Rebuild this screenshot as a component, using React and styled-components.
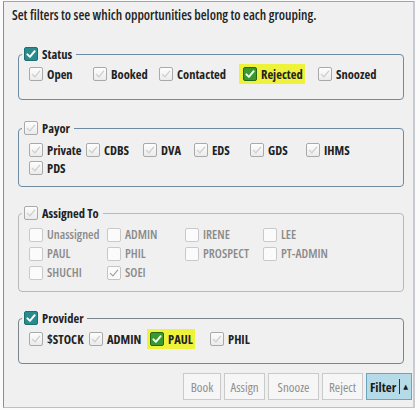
import React from 'react';
import styled, { createGlobalStyle } from 'styled-components';

const GlobalStyle = createGlobalStyle`
  html, body {
    margin: 0;
    padding: 0;
    background: #fbfbfb;
  }
  body {
    font-family: "Open Sans", "DejaVu Sans Condensed", sans-serif;
    font-stretch: 75%;
    color: #1e1e1e;
  }
`;

const Frame = styled.div`
  width: 420px;
  height: 410px;
  box-sizing: border-box;
  padding: 1px 5px 2px 3px;
`;

const Panel = styled.div`
  height: 407px;
  box-sizing: border-box;
  background: #f0f0f0;
  border-top: 1px solid #a4a4a4;
  border-left: 1px solid #8e8e8e;
  border-right: 2px solid #c7cbd0;
  border-bottom: 1px solid #a6c6de;
  padding: 5px 9px 0 8px;
`;

const Title = styled.div`
  font-size: 13.5px;
  font-weight: 600;
  line-height: 16px;
  height: 16px;
  color: #222;
  white-space: nowrap;
`;

const Group = styled.fieldset`
  margin: ${p => p.$top}px 0 0 6px;
  padding: ${p => p.$pt}px 9px ${p => p.$pb}px 10px;
  border: 1px solid ${p => p.$line};
  border-radius: 4px;
  min-width: 0;
`;

const Legend = styled.legend`
  display: flex;
  align-items: center;
  gap: 4px;
  height: 16px;
  margin-left: -7px;
  padding: 0 4px 0 2px;
  font-size: 12.5px;
  font-weight: 700;
  color: #222;
`;

const Options = styled.div`
  display: flex;
  flex-wrap: wrap;
`;

const Item = styled.div`
  display: flex;
  align-items: stretch;
  flex: none;
  width: ${p => (p.$w ? `${p.$w}px` : 'auto')};
  height: ${p => p.$h}px;
`;

const Mark = styled.span`
  display: inline-flex;
  align-items: center;
  gap: 4px;
  padding: ${p => (p.$hl ? p.$pad : '0')};
  background: ${p => (p.$hl ? '#eff23a' : 'transparent')};
`;

const Label = styled.span`
  font-size: 12.5px;
  font-weight: ${p => (p.$muted ? 600 : 700)};
  color: ${p => (p.$muted ? '#8a8a8a' : '#222')};
  white-space: nowrap;
`;

const tones = {
  off: { edge: '#a9a9a9', fill: 'linear-gradient(#fdfdfd, #ebebeb)', tick: '#cdcdcd', sw: 1.3 },
  blank: { edge: '#c9c9c9', fill: '#fbfbfb', tick: null, sw: 1.3 },
  faint: { edge: '#c4c4c4', fill: '#fbfbfb', tick: '#9c9c9c', sw: 1.1 },
  teal: { edge: '#1d7072', fill: '#2a8b8c', tick: '#ffffff', sw: 2 },
  green: { edge: '#24661c', fill: '#3a982e', tick: '#f2fff0', sw: 2 },
};

const Box = styled.span`
  width: 14px;
  height: 14px;
  box-sizing: border-box;
  flex: none;
  display: inline-flex;
  align-items: center;
  justify-content: center;
  border: 1px solid ${p => tones[p.$tone].edge};
  background: ${p => tones[p.$tone].fill};
  border-radius: 2px;
`;

function Check({ tone = 'off' }) {
  const t = tones[tone];
  return (
    <Box $tone={tone}>
      {t.tick && (
        <svg width="12" height="12" viewBox="0 0 12 12">
          <path d="M2.4 6.4 L4.9 8.9 L9.7 3.2" fill="none" stroke={t.tick} strokeWidth={t.sw} strokeLinecap="round" strokeLinejoin="round" />
        </svg>
      )}
    </Box>
  );
}

const Bar = styled.div`
  display: flex;
  justify-content: flex-end;
  gap: 3px;
  margin: 9px -8px 0 0;
`;

const Button = styled.button`
  width: ${p => p.$w}px;
  height: 27px;
  box-sizing: border-box;
  padding: 0;
  display: inline-flex;
  align-items: center;
  justify-content: center;
  gap: 3px;
  font-family: inherit;
  font-stretch: inherit;
  font-size: 13px;
  font-weight: ${p => (p.$active ? 700 : 400)};
  color: ${p => (p.$active ? '#1a1a1a' : '#8f8f8f')};
  background: ${p => (p.$active ? '#b6dbe8' : '#f6f6f6')};
  border: 1px solid ${p => (p.$active ? '#6aa4bd' : '#cacaca')};
  border-radius: 0;
`;

const Divider = styled.span`
  width: 1px;
  height: 15px;
  background: #333;
`;

const Caret = styled.span`
  font-size: 7px;
  line-height: 1;
`;

const groups = [
  {
    title: 'Status', tone: 'teal', line: '#6e8ba1', top: 23, pt: 2, pb: 15, h: 20,
    items: [
      { label: 'Open', w: 64 },
      { label: 'Booked', w: 66 },
      { label: 'Contacted', w: 80 },
      { label: 'Rejected', w: 79, tone: 'green', hl: true, pad: '0 2px 0 4px' },
      { label: 'Snoozed' },
    ],
  },
  {
    title: 'Payor', tone: 'off', line: '#6e8ba1', top: 20, pt: 5, pb: 9, h: 18,
    items: [
      { label: 'Private', w: 57 },
      { label: 'CDBS', w: 57 },
      { label: 'DVA', w: 51 },
      { label: 'EDS', w: 56 },
      { label: 'GDS', w: 56 },
      { label: 'IHMS', w: 56 },
      { label: 'PDS', w: 57 },
    ],
  },
  {
    title: 'Assigned To', tone: 'off', line: '#b9b9b9', top: 18, pt: 4, pb: 9, h: 19, muted: true,
    items: ['Unassigned', 'ADMIN', 'IRENE', 'LEE', 'PAUL', 'PHIL', 'PROSPECT', 'PT-ADMIN', 'SHUCHI'].map(label => ({
      label, w: 78, tone: 'blank',
    })).concat([{ label: 'SOEI', w: 78, tone: 'faint' }]),
  },
  {
    title: 'Provider', tone: 'teal', line: '#7c848c', top: 18, pt: 3, pb: 14, h: 20,
    items: [
      { label: '$STOCK', w: 60 },
      { label: 'ADMIN', w: 58 },
      { label: 'PAUL', w: 63, tone: 'green', hl: true, pad: '0 2px 0 3px' },
      { label: 'PHIL' },
    ],
  },
];

const buttons = [
  { label: 'Book', w: 38 },
  { label: 'Assign', w: 41 },
  { label: 'Snooze', w: 51 },
  { label: 'Reject', w: 41 },
];

export default function App() {
  return (
    <>
      <GlobalStyle />
      <Frame>
        <Panel>
          <Title>Set filters to see which opportunities belong to each grouping.</Title>
          {groups.map(g => (
            <Group key={g.title} $top={g.top} $pt={g.pt} $pb={g.pb} $line={g.line}>
              <Legend>
                <Check tone={g.tone} />
                {g.title}
              </Legend>
              <Options>
                {g.items.map(it => (
                  <Item key={it.label} $w={it.w} $h={g.h}>
                    <Mark $hl={it.hl} $pad={it.pad}>
                      <Check tone={it.tone || 'off'} />
                      <Label $muted={g.muted}>{it.label}</Label>
                    </Mark>
                  </Item>
                ))}
              </Options>
            </Group>
          ))}
          <Bar>
            {buttons.map(b => (
              <Button key={b.label} $w={b.w}>{b.label}</Button>
            ))}
            <Button $w={46} $active>
              Filter
              <Divider />
              <Caret>▲</Caret>
            </Button>
          </Bar>
        </Panel>
      </Frame>
    </>
  );
}
